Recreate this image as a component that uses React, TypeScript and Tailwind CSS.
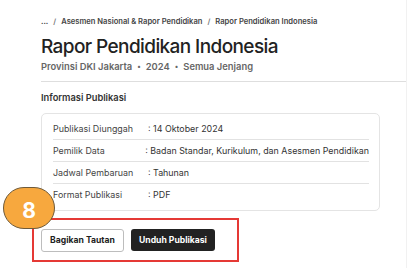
import React from "react";

const rows = [
  ["Publikasi Diunggah", ": 14 Oktober 2024"],
  ["Pemilik Data", ": Badan Standar, Kurikulum, dan Asesmen Pendidikan"],
  ["Jadwal Pembaruan", ": Tahunan"],
  ["Format Publikasi", ": PDF"],
];

export default function App() {
  return (
    <div
      className="relative w-[407px] h-[268px] overflow-hidden bg-white flex"
      style={{ fontFamily: "Inter, 'Noto Sans', sans-serif" }}
    >
      <div className="flex-1 flex flex-col pt-[17px] pl-[41px]">
        <div className="text-[7.6px] leading-[10px] font-semibold text-[#444] flex gap-[5px]">
          <span>...</span>
          <span className="text-[#777]">/</span>
          <span>Asesmen Nasional &amp; Rapor Pendidikan</span>
          <span className="text-[#777]">/</span>
          <span>Rapor Pendidikan Indonesia</span>
        </div>
        <h1 className="mt-[8px] text-[19px] leading-[24px] font-medium text-[#222] tracking-[-0.6px]">
          Rapor Pendidikan Indonesia
        </h1>
        <div className="mt-[1px] text-[9.4px] leading-[14px] font-semibold text-[#666] flex items-center gap-[5px]">
          <span>Provinsi DKI Jakarta</span>
          <span className="text-[7px]">•</span>
          <span>2024</span>
          <span className="text-[7px]">•</span>
          <span>Semua Jenjang</span>
        </div>
        <div className="mt-[7px] h-px bg-[#dedede]" />
        <div className="mt-[10px] text-[9.3px] leading-[12px] font-semibold text-[#333]">
          Informasi Publikasi
        </div>
        <div className="mt-[9px] w-[339px] border border-[#e4e4e4] rounded-[5px] pl-[11px] pr-[10px] py-[4px]">
          {rows.map(([k, v], i) => (
            <div
              key={k}
              className={
                "flex items-center h-[22px] text-[8.9px] " +
                (i < rows.length - 1 ? "border-b border-[#e2e2e2]" : "")
              }
            >
              <span className="w-[95px] text-[#444]">{k}</span>
              <span className="text-[#333] whitespace-nowrap">{v}</span>
            </div>
          ))}
        </div>
        <div className="mt-[7px] -ml-[9px] w-[207px] h-[44px] border-2 border-[#e53935] flex items-center pl-[7px] gap-[7px]">
          <button className="w-[83px] h-[23px] border border-[#bdbdbd] rounded-[3px] bg-white text-[8.6px] font-bold text-[#222]">
            Bagikan Tautan
          </button>
          <button className="w-[84px] h-[22px] rounded-[3px] bg-[#222] text-[8.6px] font-bold text-white">
            Unduh Publikasi
          </button>
        </div>
      </div>
      <div className="w-px bg-[#f1f1f1]" />
      <div className="absolute left-[3px] top-[187px] w-[52px] h-[42px] rounded-full bg-[#f7a83e] border border-[#6e5a3a] flex items-center justify-center">
        <span className="text-white font-bold text-[21px] leading-none mt-[4px]">8</span>
      </div>
    </div>
  );
}
